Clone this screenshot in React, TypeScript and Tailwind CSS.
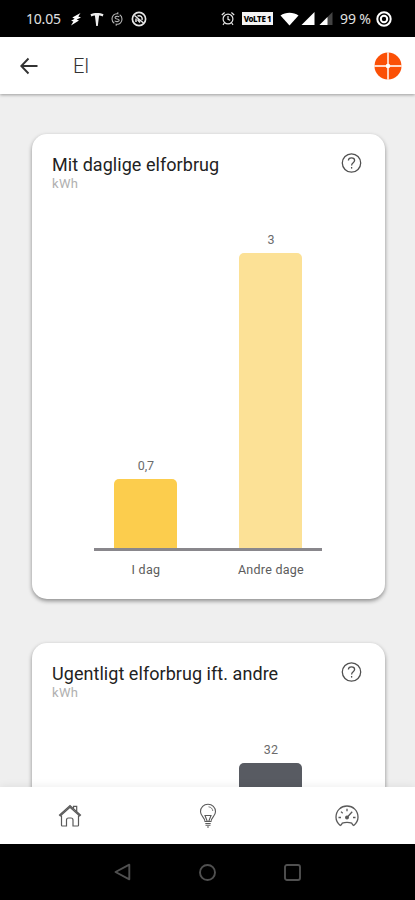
import type { ReactNode } from 'react';

type Bar = { id: string; label?: string; value?: string; height: number; color: string };

const DAILY: Bar[] = [
  { id: 'today', label: 'I dag', value: '0,7', height: 68.5, color: 'bg-[#fccd4d]' },
  { id: 'others', label: 'Andre dage', value: '3', height: 294.5, color: 'bg-[#fce196]' },
];

const WEEKLY: Bar[] = [
  { id: 'week', height: 0, color: 'bg-[#fccd4d]' },
  { id: 'others', value: '32', height: 294, color: 'bg-[#585b62]' },
];

function StatusBar() {
  return (
    <div className="flex h-[37px] shrink-0 items-center bg-black pl-[26px] pr-[23px] font-['Noto_Sans',sans-serif] text-[14px] text-[#e0e0e0]">
      <span className="w-[36px] tracking-[-0.2px]">10.05</span>
      <svg width="12" height="14" viewBox="0 0 12 14" className="ml-[8px]" fill="#fff">
        <path d="M10.500 1 2.300 5.600l2.400 1.200-3.600 2 2.300.8L1 13.500 9 8.600 6.600 7.500 11 5.500 8.300 4.600z" />
      </svg>
      <svg width="14" height="14" viewBox="0 0 14 14" className="ml-[8px]" fill="#eee">
        <path d="M.5 2.200C4 .6 10 .6 13.500 2.200l-.8 2.300c-1.300-.6-2.300-.8-3.600-.9L7.800 14H6.200L4.900 3.600c-1.300.1-2.300.3-3.600.9z" />
      </svg>
      <svg width="12" height="16" viewBox="0 0 12 16" className="ml-[7px]" fill="none" stroke="#b4b4b4" strokeWidth="1.1">
        <path d="M6.800 1.200v1.600C3 2.200 1 5 1 8c0 2 1 3.500 2.300 4.300M5.200 14.800v-1.600C9 13.800 11 11 11 8c0-2-1-3.500-2.300-4.300" />
        <path d="M8.200 6C7.500 5 4 5 4 6.700 4 8.500 8.200 7.400 8.200 9.300c0 1.700-3.700 1.700-4.500.5" />
      </svg>
      <svg width="16" height="16" viewBox="0 0 16 16" className="ml-[8px]" fill="none" stroke="#e6e6e6" strokeWidth="1.700">
        <circle cx="8" cy="8" r="6.600" />
        <path d="M3.500 4.500 12.500 12M5 11V7.500M11 9c1-3-1.500-5-4.500-4M6.500 8.500 9 11.500" strokeWidth="1.500" />
      </svg>

      <svg width="14" height="15" viewBox="0 0 14 15" className="ml-auto" fill="none" stroke="#e6e6e6" strokeWidth="1.200">
        <circle cx="7" cy="8" r="4.900" />
        <path d="M7 5v3.300l2.200 1M.8 4 3.600 1.500M13.200 4l-2.800-2.500M3.300 12l-1.300 1.800M10.700 12l1.300 1.800" />
      </svg>
      <span className="ml-[7px] flex h-[13px] w-[31px] items-center justify-center bg-[#f4f4f4] text-[8px] font-extrabold leading-none tracking-[-0.4px] text-black">
        VoLTE 1
      </span>
      <svg width="19" height="14" viewBox="0 0 19 14" className="ml-[7px]" fill="#fff">
        <path d="M.5 3.500C5.500-.3 13.500-.3 18.500 3.500L9.500 13.500z" />
      </svg>
      <svg width="14" height="13" viewBox="0 0 14 13" className="ml-[2px]" fill="#fff">
        <path d="M13.500 0v13H.5z" />
      </svg>
      <svg width="14" height="13" viewBox="0 0 14 13" className="ml-[4px]">
        <path d="M13.500 0v13H.5z" fill="#444" />
        <path d="M8.500 5v8H.5z" fill="#fff" />
      </svg>
      <span className="ml-[7px] w-[32px] whitespace-nowrap tracking-[-0.1px]">99 %</span>
      <svg width="16" height="16" viewBox="0 0 16 16" className="ml-[4px]" fill="none" stroke="#fff">
        <circle cx="8" cy="8" r="6.700" strokeWidth="2" />
        <circle cx="8" cy="8" r="3.200" strokeWidth="2" />
      </svg>
    </div>
  );
}

function Header() {
  return (
    <header className="z-10 flex h-[57px] shrink-0 items-center bg-white pl-5 pr-[13px] shadow-[0_1px_3px_rgba(0,0,0,0.35)]">
      <svg width="18" height="18" viewBox="0 0 18 18" fill="none" stroke="#333" strokeWidth="1.900">
        <path d="M17.500 9H1.500M8.500 1.500 1.300 9l7.200 7.500" />
      </svg>
      <h1 className="ml-[35px] text-[20px] font-light text-[#333]">El</h1>
      <svg width="28" height="28" viewBox="0 0 28 28" className="ml-auto">
        <circle cx="14" cy="14" r="13.500" fill="#fb5006" />
        <path d="M14 0v28M0 14h28" stroke="#ffd9c7" strokeWidth="1.900" />
        <circle cx="14" cy="14" r="2.300" fill="#fff" />
      </svg>
    </header>
  );
}

function HelpIcon() {
  return (
    <svg width="21" height="20" viewBox="0 0 21 20" className="mt-[0.5px]" fill="none" stroke="#505050" strokeWidth="1.300">
      <circle cx="10.500" cy="10" r="9.200" />
      <path d="M7.400 7.600C7.400 3.900 13.600 4 13.600 7.500c0 2.200-3 2.300-3 4.900" />
      <path d="M10.600 14v1.600" />
    </svg>
  );
}

function UsageCard({ title, bars }: { title: string; bars: Bar[] }) {
  return (
    <section className="h-[465px] shrink-0 rounded-[15px] bg-white pt-[18px] shadow-[0_2px_4px_rgba(0,0,0,0.42)]">
      <div className="flex h-[42px] justify-between pl-5 pr-[23px]">
        <div>
          <h2 className="text-[18px] leading-[25px] tracking-[0.05px] text-[#222]">{title}</h2>
          <p className="text-[13px] leading-[14px] tracking-[0.3px] text-[#b0b0b0]">kWh</p>
        </div>
        <HelpIcon />
      </div>
      <div className="ml-[62.400px] w-[228px]">
        <div className="flex h-[356.500px] items-end justify-between border-b-[3px] border-[#89878c] px-5">
          {bars.map((b) => (
            <div key={b.id} className="flex w-[63px] flex-col items-center">
              {b.value && <span className="mb-[3px] text-[12.5px] leading-[20px] text-[#6b6b6b]">{b.value}</span>}
              <div className={`w-full rounded-t-[5px] ${b.color}`} style={{ height: b.height }} />
            </div>
          ))}
        </div>
        <div className="flex justify-between px-5 pt-[9px]">
          {bars.map((b) => (
            <span key={b.id} className="flex w-[63px] justify-center whitespace-nowrap text-[12.5px] leading-[20px] tracking-[0.25px] text-[#5c5c5c]">
              {b.label}
            </span>
          ))}
        </div>
      </div>
    </section>
  );
}

function Tab({ children }: { children: ReactNode }) {
  return <button className="flex flex-1 items-center justify-center pl-px">{children}</button>;
}

function TabBar() {
  return (
    <nav className="z-10 flex h-[57px] shrink-0 bg-white shadow-[0_-1px_8px_rgba(0,0,0,0.07)]">
      <Tab>
        <svg width="24" height="24" viewBox="0 0 24 24" fill="none" stroke="#5a5a5a" strokeWidth="1.200">
          <path d="M3.500 11.500v9.700q0 .8.800.8h4.200v-6q0-2 2-2h2.500q2 0 2 2v6h4.700q.8 0 .8-.8V11.500" />
          <path d="m1.500 11 .9 1L12 3.200l9.600 8.800.9-1L12 1.500z" />
          <path d="M15.500 4.500V2.300h3.200v5.200" />
        </svg>
      </Tab>
      <Tab>
        <svg width="18" height="26" viewBox="0 0 18 26" fill="none" stroke="#5a5a5a" strokeWidth="1.100">
          <path d="M6 18.500c0-4-4.500-5.500-4.500-9.800C1.500 4.300 4.700 1.300 9 1.300s7.500 3 7.500 7.400C16.500 13 12 14.500 12 18.500z" />
          <path d="M8.200 18.300 6 12.500h6l-2.200 5.800M6.300 20.500h5.400M6.500 22.300h5M8 24h2" />
          <path d="M9.500 3.800c2.500.2 4 1.800 4.300 4.200" strokeWidth=".8" />
        </svg>
      </Tab>
      <Tab>
        <svg width="25" height="24" viewBox="-1 0 25 24" fill="none" stroke="#5a5a5a" strokeWidth="1.300" strokeLinejoin="round">
          <path d="M5.300 21.500C2.500 19.300 1 16.800 1 13.300 1 6.500 6 2 12 2s11 4.500 11 11.300c0 3.500-1.500 6-4.300 8.200q-1.200-.4-1.900-2.300-4.800-1.800-9.600 0-.7 1.900-1.900 2.300z" />
          <path d="M3.500 13.500H6M18 13.500h2.500M12 4.800v2.400M6 7.600l1.700 1.600M12 13.500l5.200-5.800" />
          <circle cx="12" cy="13.500" r="1.300" fill="#5a5a5a" />
        </svg>
      </Tab>
    </nav>
  );
}

function SystemNav() {
  return (
    <div className="flex h-14 shrink-0 items-center justify-center gap-[68px] bg-black">
      <svg width="17" height="18" viewBox="0 0 17 18" fill="none" stroke="#505050" strokeWidth="1.900" strokeLinejoin="round">
        <path d="M15.300 1.700v14.600L1.500 9z" />
      </svg>
      <svg width="17" height="17" viewBox="0 0 17 17" fill="none" stroke="#505050" strokeWidth="1.900">
        <circle cx="8.500" cy="8.500" r="7.500" />
      </svg>
      <svg width="17" height="17" viewBox="0 0 17 17" fill="none" stroke="#505050" strokeWidth="1.900">
        <rect x="1" y="1" width="15" height="15" rx="2" />
      </svg>
    </div>
  );
}

export default function App() {
  return (
    <div className="flex h-[900px] w-[415px] flex-col overflow-hidden bg-[#efefef] font-[Roboto,sans-serif]">
      <StatusBar />
      <Header />
      <main className="flex min-h-0 flex-1 flex-col gap-[44px] overflow-hidden pl-8 pr-[30px] pt-10">
        <UsageCard title="Mit daglige elforbrug" bars={DAILY} />
        <UsageCard title="Ugentligt elforbrug ift. andre" bars={WEEKLY} />
      </main>
      <TabBar />
      <SystemNav />
    </div>
  );
}
